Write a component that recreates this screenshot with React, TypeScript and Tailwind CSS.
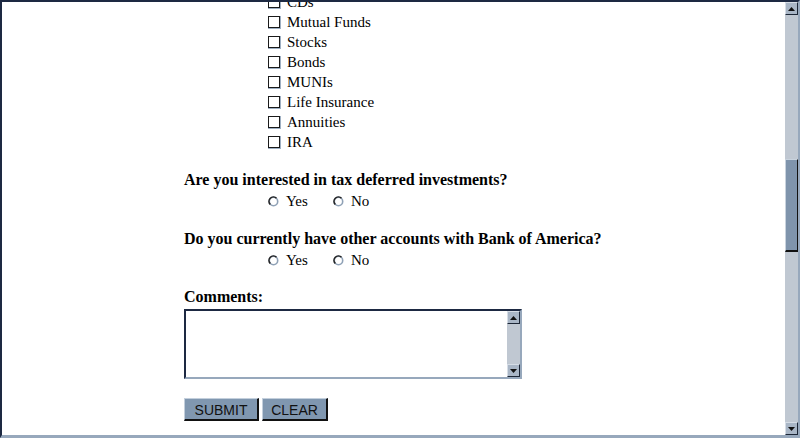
import React from "react";

const serif = { fontFamily: '"Liberation Serif", "Times New Roman", serif' };
const sans = { fontFamily: '"Liberation Sans", Arial, sans-serif' };

function Checkbox() {
  return (
    <span className="inline-flex w-[13px] h-[13px] border-r border-b border-[#9fb0c3] shrink-0">
      <span className="w-[12px] h-[12px] border border-[#1a1a1a] bg-white" />
    </span>
  );
}

function Radio() {
  return (
    <svg width="11" height="11" viewBox="0 0 11 11" className="shrink-0">
      <circle cx="5.5" cy="5.5" r="4.2" fill="white" stroke="#8fa1b6" strokeWidth="1.6" />
      <path d="M2.3 8.5 A4.2 4.2 0 0 1 8.5 2.3" fill="none" stroke="#222" strokeWidth="1.6" />
    </svg>
  );
}

function ArrowBtn({ up }: { up?: boolean }) {
  return (
    <div className="w-[13px] h-[13px] bg-[#a9b6c6] border-t border-l border-t-[#d6dde6] border-l-[#d6dde6] border-b border-r border-b-[#1c2636] border-r-[#1c2636] flex items-center justify-center shrink-0">
      <svg width="7" height="4" viewBox="0 0 7 4">
        {up ? <path d="M0 4 L3.5 0 L7 4 Z" fill="#111" /> : <path d="M0 0 L3.5 4 L7 0 Z" fill="#111" />}
      </svg>
    </div>
  );
}

const items = ["CDs", "Mutual Funds", "Stocks", "Bonds", "MUNIs", "Life Insurance", "Annuities", "IRA"];

function RadioRow() {
  return (
    <div className="h-[22px] flex items-center pl-[84px] text-[15px]">
      <Radio />
      <span className="ml-[7px] w-[47px]">Yes</span>
      <Radio />
      <span className="ml-[7px]">No</span>
    </div>
  );
}

export default function App() {
  return (
    <div
      className="w-[800px] h-[438px] overflow-hidden bg-white flex border-t-2 border-l-2 border-t-[#1d2942] border-l-[#1d2942] border-b-[3px] border-r-2 border-b-[#97a8bc] border-r-[#97a8bc] text-black"
      style={serif}
    >
      <div className="flex-1 overflow-hidden">
        <div className="mt-[-10px] pl-[182px]">
          {items.map((it) => (
            <div key={it} className="h-[20px] flex items-center pl-[84px] text-[15px]">
              <Checkbox />
              <span className="ml-[6px]">{it}</span>
            </div>
          ))}
          <div className="mt-[18px] h-[20px] flex items-center font-bold text-[16px]">
            Are you interested in tax deferred investments?
          </div>
          <RadioRow />
          <div className="mt-[17px] h-[20px] flex items-center font-bold text-[16px]">
            Do you currently have other accounts with Bank of America?
          </div>
          <RadioRow />
          <div className="mt-[16px] h-[20px] flex items-center font-bold text-[16px]">Comments:</div>
          <div className="mt-[2px] w-[338px] h-[70px] flex border-t-2 border-l-2 border-t-[#1d2942] border-l-[#1d2942] border-b-2 border-r-2 border-b-[#97a8bc] border-r-[#97a8bc] bg-white">
            <div className="flex-1" />
            <div className="w-[13px] flex flex-col bg-[#c0c8d2]">
              <ArrowBtn up />
              <div className="flex-1" />
              <ArrowBtn />
            </div>
          </div>
          <div className="mt-[19px] flex gap-[3px]" style={sans}>
            <button className="w-[75px] h-[23px] pt-[1px] bg-[#8097b0] text-[14px] text-[#111] border-t border-l border-t-[#c3cfdc] border-l-[#c3cfdc] border-b-2 border-r-2 border-b-[#111] border-r-[#111]">
              SUBMIT
            </button>
            <button className="w-[66px] h-[23px] pt-[1px] bg-[#8097b0] text-[14px] text-[#111] border-t border-l border-t-[#c3cfdc] border-l-[#c3cfdc] border-b-2 border-r-2 border-b-[#111] border-r-[#111]">
              CLEAR
            </button>
          </div>
        </div>
      </div>
      <div className="w-[13px] flex flex-col bg-[#c0c8d2]">
        <ArrowBtn up />
        <div className="h-[144px]" />
        <div className="h-[93px] bg-[#7f94ac] border-t border-l border-t-[#c9d3de] border-l-[#c9d3de] border-b-2 border-r border-b-[#111] border-r-[#111]" />
        <div className="flex-1" />
        <ArrowBtn />
      </div>
    </div>
  );
}
